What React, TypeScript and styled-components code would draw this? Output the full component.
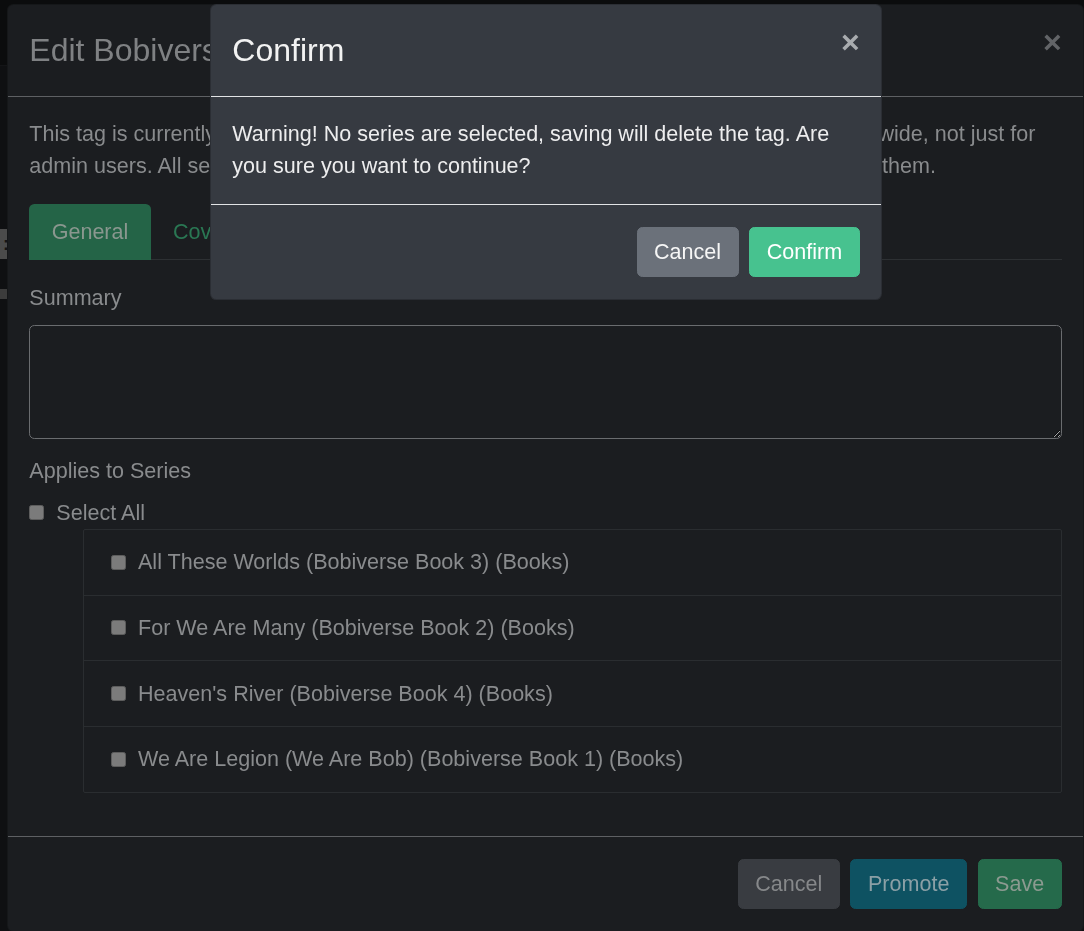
import React from "react";
import styled, { createGlobalStyle } from "styled-components";

const GlobalStyle = createGlobalStyle`
  * { box-sizing: border-box; }
  html, body {
    margin: 0;
    padding: 0;
    height: 100%;
    overflow: hidden;
    background: #0f1012;
  }
  body {
    font-family: "Liberation Sans", Arial, sans-serif;
    font-size: 21.55px;
    line-height: 32px;
  }
`;

/* ---------- page behind the backdrop ---------- */
const Page = styled.div`
  height: 931px;
  background: #0f1012;
  display: flex;
  flex-direction: column;
`;

const PageNav = styled.div`
  height: 66px;
  background: #0b0c0d;
  border-bottom: 1px solid #141517;
`;

const PageButton = styled.div`
  margin-top: 163px;
  width: 60px;
  height: 30px;
  background: #4b4b4b;
  color: #151515;
  font-weight: 700;
  font-size: 18px;
  line-height: 30px;
  padding-left: 3px;
`;

const PageBar = styled.div`
  margin-top: 30px;
  width: 60px;
  height: 10px;
  background: #3c3c3c;
`;

const PageText = styled.div`
  margin-top: 76px;
  margin-left: -12px;
  color: #555;
  font-size: 21px;
  line-height: 24px;
`;

/* ---------- modal layers ---------- */
const Layer = styled.div`
  position: fixed;
  inset: 0;
`;

const Dialog = styled.div<{ $left: number; $width: number }>`
  margin: 4px 0 0 ${(p) => p.$left}px;
  width: ${(p) => p.$width}px;
`;

const Content = styled.div<{ $bg: string }>`
  display: flex;
  flex-direction: column;
  background: ${(p) => p.$bg};
  border: 1px solid rgba(0, 0, 0, 0.2);
  border-radius: 6.4px;
`;

const Header = styled.div<{ $line: string }>`
  display: flex;
  align-items: flex-start;
  justify-content: space-between;
  padding: 21.333px;
  border-bottom: 1px solid ${(p) => p.$line};
`;

const Title = styled.h4<{ $color: string }>`
  margin: 0;
  font-size: 32px;
  line-height: 48px;
  font-weight: 400;
  color: ${(p) => p.$color};
  white-space: nowrap;
`;

const Close = styled.button<{ $color: string }>`
  padding: 21.333px;
  margin: -21.333px -21.333px -21.333px auto;
  background: transparent;
  border: 0;
  font-family: "Liberation Sans", Arial, sans-serif;
  font-size: 32px;
  font-weight: 700;
  line-height: 1;
  color: ${(p) => p.$color};
  cursor: pointer;
`;

const Body = styled.div<{ $color: string }>`
  padding: 21.333px 21.333px 22.333px;
  color: ${(p) => p.$color};
`;

const Para = styled.p<{ $mb?: number }>`
  margin: 0 0 ${(p) => p.$mb ?? 0}px;
`;

const Footer = styled.div<{ $line: string }>`
  display: flex;
  justify-content: flex-end;
  gap: 10.667px;
  padding: 21.333px;
  border-top: 1px solid ${(p) => p.$line};
`;

const Button = styled.button<{ $bg: string; $fg: string }>`
  font-family: "Liberation Sans", Arial, sans-serif;
  font-size: 21.55px;
  line-height: 32px;
  padding: 8.33px 16.5px;
  border: 1px solid ${(p) => p.$bg};
  border-radius: 5.333px;
  background: ${(p) => p.$bg};
  color: ${(p) => p.$fg};
  cursor: pointer;
`;

/* ---------- outer modal parts ---------- */
const Tabs = styled.div`
  display: flex;
  border-bottom: 1px solid #2d3033;
`;

const Tab = styled.div<{ $active?: boolean }>`
  padding: 10.667px 21.333px;
  border: 1px solid transparent;
  border-radius: 5.333px 5.333px 0 0;
  margin-bottom: -1px;
  background: ${(p) => (p.$active ? "#246447" : "transparent")};
  color: ${(p) => (p.$active ? "#8a978f" : "#2a7753")};
  white-space: nowrap;
`;

const FieldLabel = styled.div<{ $mt: number; $mb: number }>`
  margin-top: ${(p) => p.$mt}px;
  margin-bottom: ${(p) => p.$mb}px;
`;

const TextArea = styled.textarea`
  display: block;
  width: 100%;
  height: 114px;
  background: transparent;
  border: 1px solid #6a6c6f;
  border-radius: 5.333px;
  resize: vertical;
  color-scheme: dark;
  font: inherit;
  color: inherit;
  padding: 8px 16px;
  outline: none;
`;

const CheckRow = styled.div`
  display: flex;
  align-items: center;
  gap: 12px;
`;

const Check = styled.span`
  flex: none;
  width: 15px;
  height: 15px;
  background: #7b7b7b;
  border: 1px solid #5d5d5d;
  border-radius: 2.5px;
`;

const SeriesList = styled.div`
  margin: 0 0 21.333px 54px;
  border: 1px solid #2a2d30;
  border-radius: 2px;
`;

const SeriesItem = styled(CheckRow)`
  padding: 16.33px 26.667px;
  & + & {
    border-top: 1px solid #2a2d30;
  }
`;

const series = [
  "All These Worlds (Bobiverse Book 3) (Books)",
  "For We Are Many (Bobiverse Book 2) (Books)",
  "Heaven's River (Bobiverse Book 4) (Books)",
  "We Are Legion (We Are Bob) (Bobiverse Book 1) (Books)",
];

export default function App() {
  return (
    <>
      <GlobalStyle />
      <Page>
        <PageNav />
        <PageButton>:</PageButton>
        <PageBar />
        <PageText>u</PageText>
      </Page>

      <Layer>
        <Dialog $left={7} $width={1077}>
          <Content $bg="#1b1d20">
            <Header $line="#5e6063">
              <Title $color="#7f8183">Edit Bobiverse Tag</Title>
              <Close $color="#626467">×</Close>
            </Header>
            <Body $color="#898b8d">
              <Para $mb={22.5}>
                This tag is currently a global tag, all updates you make to it will be visible to all users site-wide, not just for
                <br />
                admin users. All series that are not selected below will instantly get the tag removed from them.
              </Para>
              <Tabs>
                <Tab $active>General</Tab>
                <Tab>Cover Image</Tab>
              </Tabs>
              <FieldLabel $mt={22.5} $mb={10.667}>Summary</FieldLabel>
              <TextArea defaultValue="" />
              <FieldLabel $mt={16} $mb={10}>Applies to Series</FieldLabel>
              <CheckRow>
                <Check />
                <span>Select All</span>
              </CheckRow>
              <SeriesList>
                {series.map((s) => (
                  <SeriesItem key={s}>
                    <Check />
                    <span>{s}</span>
                  </SeriesItem>
                ))}
              </SeriesList>
            </Body>
            <Footer $line="#5e6063">
              <Button $bg="#393c41" $fg="#86888a">Cancel</Button>
              <Button $bg="#0e5262" $fg="#8ba0a6">Promote</Button>
              <Button $bg="#256a4b" $fg="#8b9a90">Save</Button>
            </Footer>
          </Content>
        </Dialog>
      </Layer>

      <Layer>
        <Dialog $left={210} $width={672}>
          <Content $bg="#363a41">
            <Header $line="#e2e3e5">
              <Title $color="#f2f2f2">Confirm</Title>
              <Close $color="#a8abae">×</Close>
            </Header>
            <Body $color="#ededee">
              <Para>
                Warning! No series are selected, saving will delete the tag. Are you sure you want to continue?
              </Para>
            </Body>
            <Footer $line="#e2e3e5">
              <Button $bg="#6b717a" $fg="#f6f6f6">Cancel</Button>
              <Button $bg="#47c28f" $fg="#ffffff">Confirm</Button>
            </Footer>
          </Content>
        </Dialog>
      </Layer>
    </>
  );
}
